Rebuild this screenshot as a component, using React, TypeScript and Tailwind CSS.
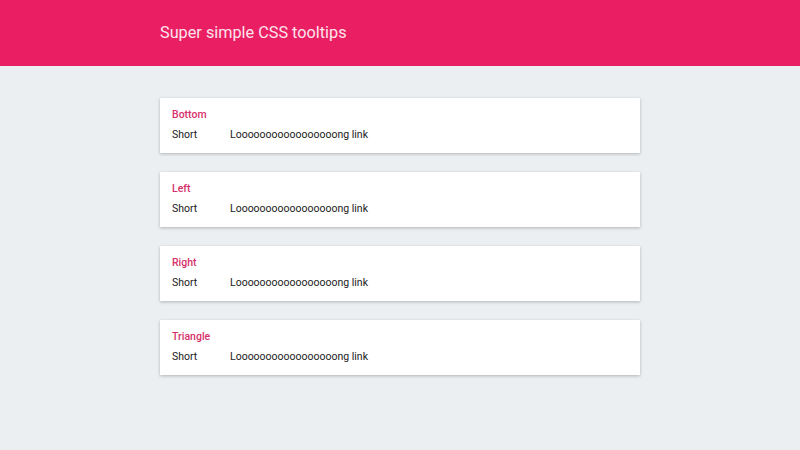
const sections = ["Bottom", "Left", "Right", "Triangle"];

export default function App() {
  return (
    <div className="min-h-screen bg-[#eceff1] font-['Roboto',sans-serif]">
      {/* Header */}
      <header className="h-[66px] bg-[#ea1f63] flex items-center">
        <h1 className="ml-[160px] text-[16.25px] text-[#fde4ec] font-normal">
          Super simple CSS tooltips
        </h1>
      </header>

      {/* Tooltip demo cards */}
      <main className="w-[480px] ml-[160px] pt-[32px] flex flex-col gap-[19px]">
        {sections.map((s) => (
          <section
            key={s}
            className="bg-white h-[55px] px-[12px] pt-[10px] shadow-[0_1px_3px_rgba(0,0,0,0.25)]"
          >
            <h2 className="text-[10.5px] leading-[13px] font-medium text-[#d6306a]">
              {s}
            </h2>
            <div className="flex mt-[7px] text-[10.5px] leading-[13px] text-[#1a1a1a]">
              <a className="w-[58px]">Short</a>
              <a>Looooooooooooooooong link</a>
            </div>
          </section>
        ))}
      </main>
    </div>
  );
}
